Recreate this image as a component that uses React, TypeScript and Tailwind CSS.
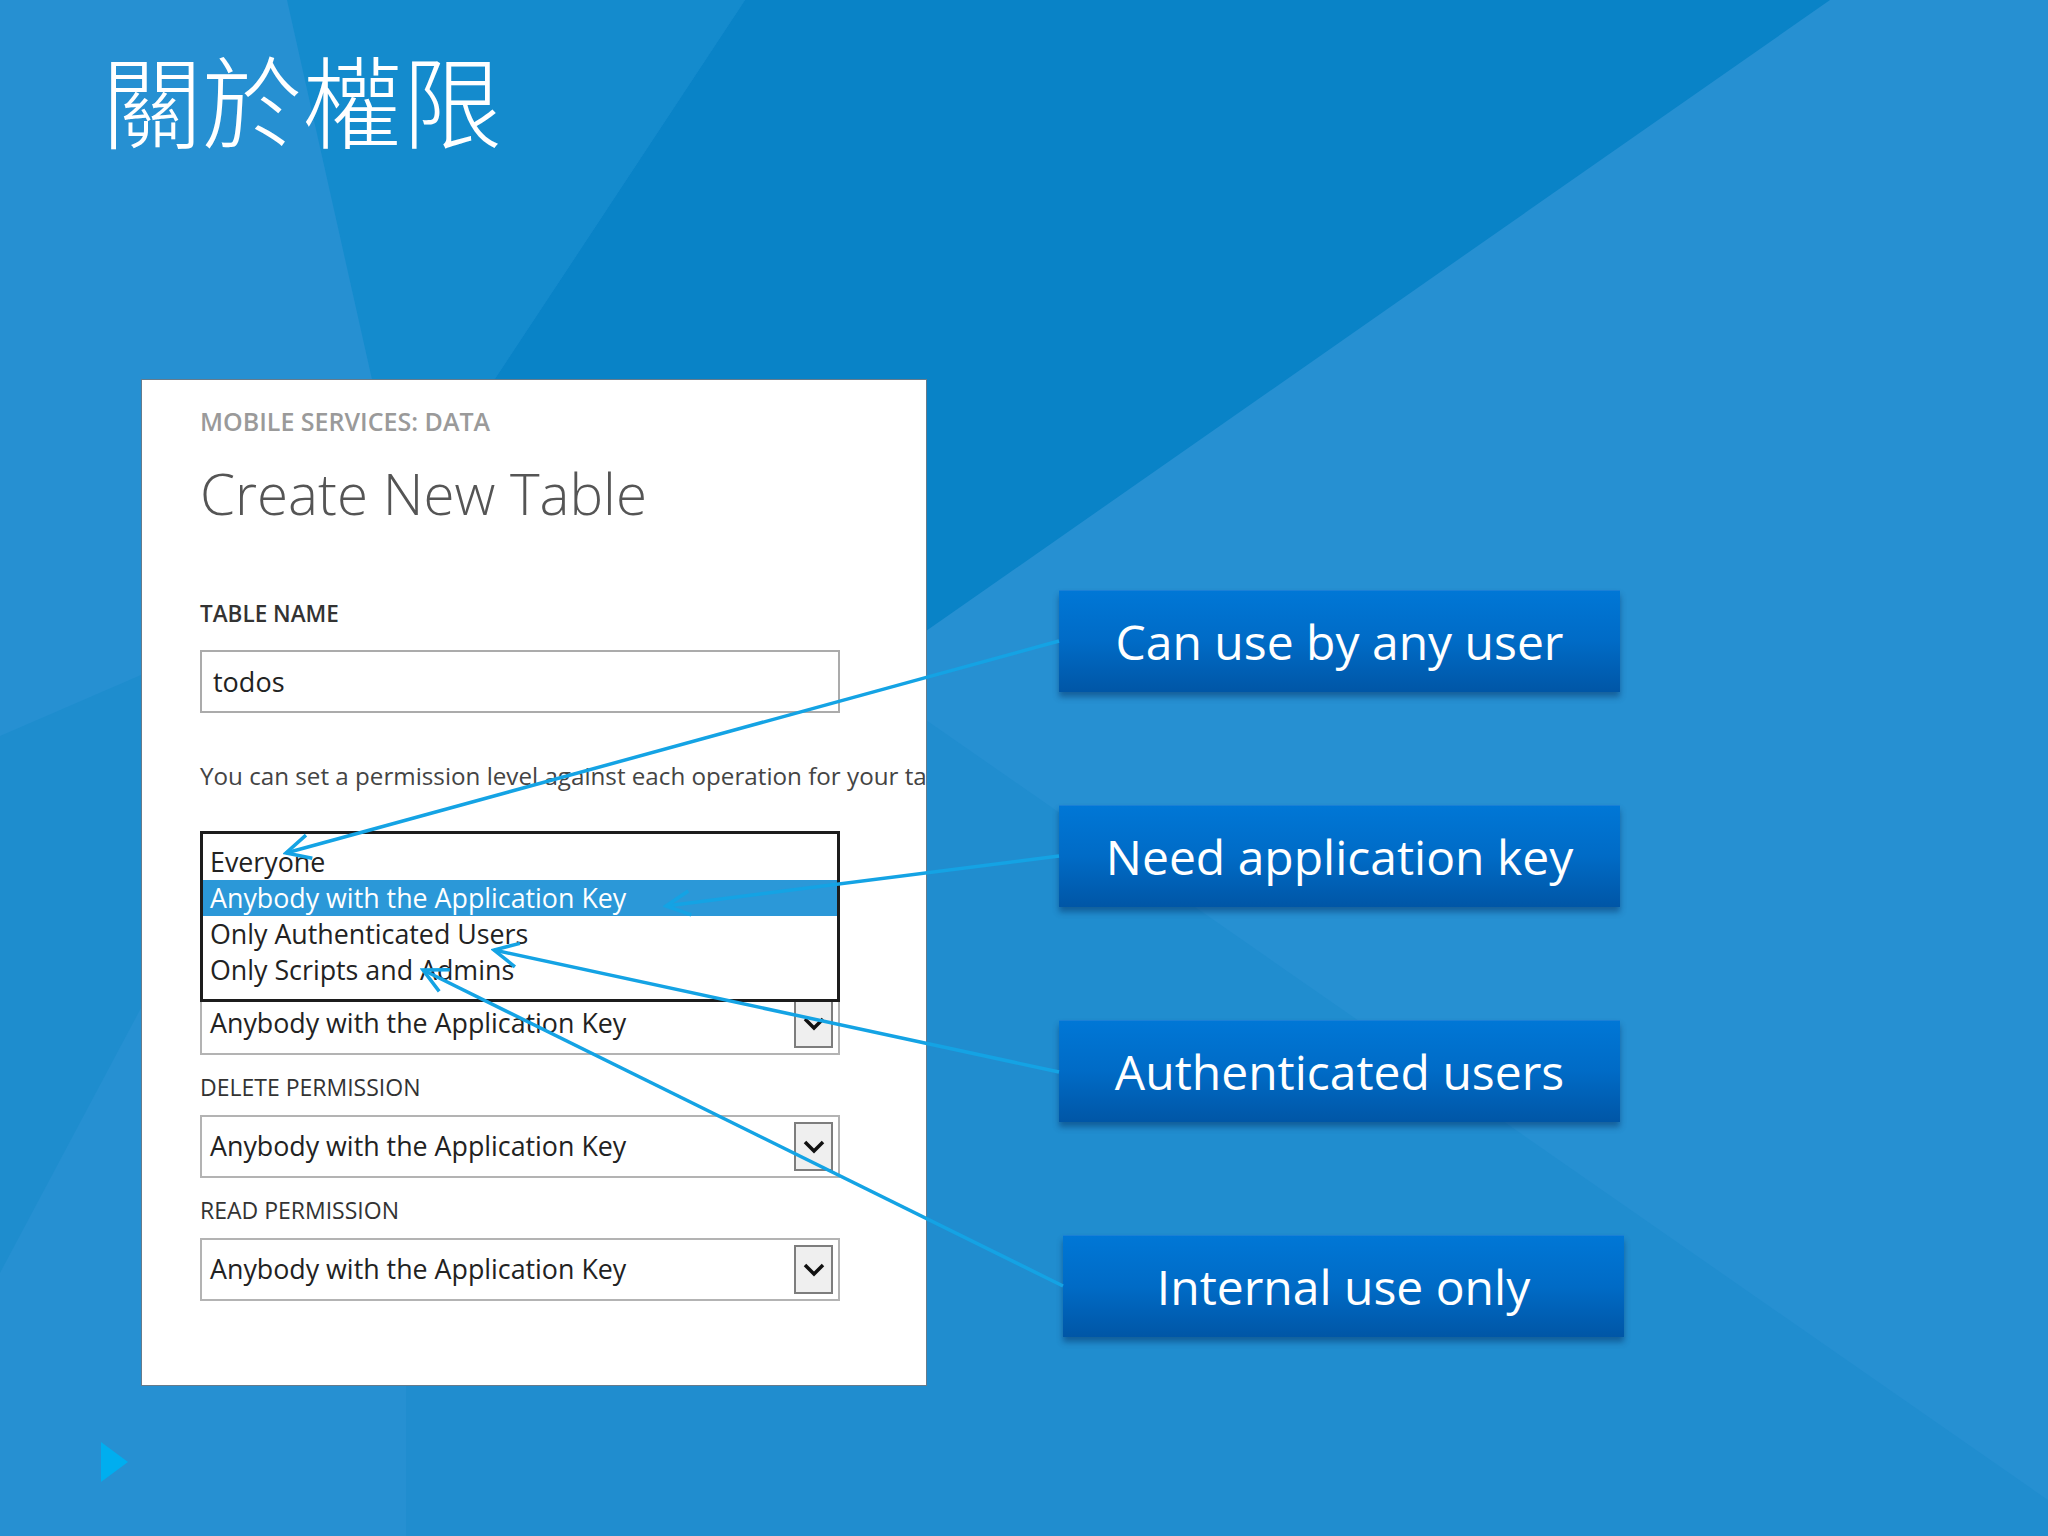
import React from 'react';

const callouts = [
    { label: 'Can use by any user', shift: '' },
    { label: 'Need application key', shift: '' },
    { label: 'Authenticated users', shift: '' },
    { label: 'Internal use only', shift: 'ml-[4px]' },
];

const options = [
    'Everyone',
    'Anybody with the Application Key',
    'Only Authenticated Users',
    'Only Scripts and Admins',
];

function Chevron() {
    return (
        <svg width="22" height="14" viewBox="0 0 22 14">
            <path d="M2 2 L11 11 L20 2" fill="none" stroke="#111" strokeWidth="3.5" />
        </svg>
    );
}

function Select({ value }: { value: string }) {
    return (
        <div className="relative flex h-[63px] w-[640px] items-center border-2 border-[#b3b3b3] bg-white pl-[8px]">
            <span className="text-[26.8px] leading-none text-[#222]">{value}</span>
            <div className="absolute top-[5px] right-[5px] flex h-[49px] w-[39px] items-center justify-center border-2 border-[#7d7d7d] bg-[#efefef]">
                <Chevron />
            </div>
        </div>
    );
}

export default function App() {
    return (
        <div className="relative h-[1536px] w-[2048px] overflow-hidden bg-[#2690d2] font-['Open_Sans',sans-serif]">
            {/* slide background facets */}
            <svg className="absolute inset-0" width="2048" height="1536" viewBox="0 0 2048 1536">
                <polygon points="287,0 745,0 403,518" fill="#148bcd" />
                <polygon points="745,0 1830,0 926,631 926,800 217,800" fill="#0983c7" />
                <polygon points="926,720 2048,1500 2048,1536 406,1536 406,1386 926,1386" fill="#208dcf" />
                <polygon points="0,736 141,675 141,1008 0,1273" fill="#1e8dce" />
            </svg>

            <div className="relative flex flex-col">
                <h1 className="pt-[48px] pl-[102px] font-['Noto_Sans_CJK_TC','Noto_Sans_CJK_SC',sans-serif] text-[100px] leading-none font-light text-white">
                    關於權限
                </h1>

                <div className="mt-[231px] flex items-start pl-[141px]">
                    <div className="flex h-[1007px] w-[786px] flex-col overflow-hidden border border-[#667b8c] bg-white pt-[29px] pl-[58px]">
                        <p className="text-[25px] leading-none font-semibold text-[#9a9a9a]">
                            MOBILE SERVICES: DATA
                        </p>
                        <h2 className="mt-[32px] text-[56.5px] leading-none font-light text-[#555]">
                            Create New Table
                        </h2>
                        <p className="mt-[80px] text-[22.5px] leading-none font-semibold text-[#333]">
                            TABLE NAME
                        </p>
                        <div className="mt-[25px] flex h-[63px] w-[640px] items-center border-2 border-[#ababab] pl-[11px]">
                            <span className="text-[27px] leading-none text-[#222]">todos</span>
                        </div>
                        <p className="mt-[51px] text-[24.2px] leading-none whitespace-nowrap text-[#444]">
                            You can set a permission level against each operation for your table.
                        </p>

                        <div className="relative mt-[204px]">
                            <Select value="Anybody with the Application Key" />
                            {/* opened dropdown list */}
                            <div className="absolute top-[-161px] left-0 h-[171px] w-[640px] border-[3px] border-[#1c1c1c] bg-white pt-[10px]">
                                {options.map((opt, i) => (
                                    <div
                                        key={opt}
                                        className={
                                            i === 1
                                                ? 'h-[36px] bg-[#2b98d8] pl-[7px] text-[26.8px] leading-[36px] text-white'
                                                : 'h-[36px] pl-[7px] text-[26.8px] leading-[36px] text-[#222]'
                                        }
                                    >
                                        {opt}
                                    </div>
                                ))}
                            </div>
                        </div>

                        <p className="mt-[21px] text-[23px] leading-none text-[#333]">DELETE PERMISSION</p>
                        <div className="mt-[16px]">
                            <Select value="Anybody with the Application Key" />
                        </div>
                        <p className="mt-[21px] text-[23px] leading-none text-[#333]">READ PERMISSION</p>
                        <div className="mt-[16px]">
                            <Select value="Anybody with the Application Key" />
                        </div>
                    </div>

                    <div className="mt-[211px] ml-[132px] flex flex-col gap-[113px]">
                        {callouts.map((c) => (
                            <div
                                key={c.label}
                                className={`flex h-[102px] w-[561px] items-center justify-center border-t border-[#1a80d6] bg-gradient-to-b from-[#0077d6] via-[#006bc6] to-[#0056a6] shadow-[0_5px_6px_rgba(0,40,90,0.45)] ${c.shift}`}
                            >
                                <span className="text-[48px] leading-none text-white">{c.label}</span>
                            </div>
                        ))}
                    </div>
                </div>

                <svg className="mt-[56px] ml-[101px]" width="28" height="40" viewBox="0 0 28 40">
                    <polygon points="0,0 27,20 0,40" fill="#00aeef" />
                </svg>
            </div>

            {/* callout arrows */}
            <svg
                className="pointer-events-none absolute inset-0"
                width="2048"
                height="1536"
                viewBox="0 0 2048 1536"
            >
                <defs>
                    <marker
                        id="head"
                        viewBox="0 0 30 30"
                        refX="27"
                        refY="15"
                        markerWidth="30"
                        markerHeight="30"
                        markerUnits="userSpaceOnUse"
                        orient="auto"
                    >
                        <path d="M3 3 L27 15 L3 27" fill="none" stroke="#14a3e4" strokeWidth="3.5" />
                    </marker>
                </defs>
                <g stroke="#14a3e4" strokeWidth="3.5" fill="none">
                    <line x1="1059" y1="641" x2="286" y2="853" markerEnd="url(#head)" />
                    <line x1="1059" y1="856" x2="666" y2="906" markerEnd="url(#head)" />
                    <line x1="1059" y1="1072" x2="494" y2="950" markerEnd="url(#head)" />
                    <line x1="1063" y1="1286" x2="423" y2="970" markerEnd="url(#head)" />
                </g>
            </svg>
        </div>
    );
}
